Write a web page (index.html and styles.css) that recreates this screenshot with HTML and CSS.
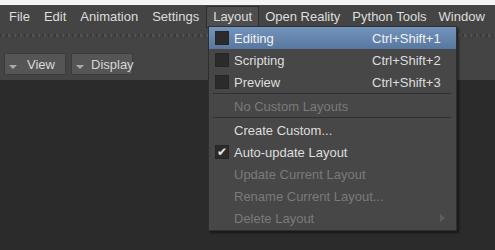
FILE: index.html
```html
<!DOCTYPE html>
<html lang="en">
<head>
  <meta charset="UTF-8">
  <title>Layout menu</title>
  <link rel="stylesheet" href="styles.css">
</head>
<body>
  <div class="app">
    <div class="topline"></div>
    <nav class="menubar">
      <span class="menu-item">File</span>
      <span class="menu-item">Edit</span>
      <span class="menu-item">Animation</span>
      <span class="menu-item">Settings</span>
      <span class="menu-item open">Layout</span>
      <span class="menu-item">Open Reality</span>
      <span class="menu-item">Python Tools</span>
      <span class="menu-item">Window</span>
    </nav>
    <div class="grip"></div>
    <div class="toolbar">
      <button class="tool-btn"><span class="tri"></span>View</button>
      <button class="tool-btn"><span class="tri"></span>Display</button>
    </div>
    <div class="workspace"></div>

    <!-- Layout dropdown -->
    <div class="dropdown">
      <div class="row active"><span class="box"></span><span class="label">Editing</span><span class="keys">Ctrl+Shift+1</span></div>
      <div class="row"><span class="box"></span><span class="label">Scripting</span><span class="keys">Ctrl+Shift+2</span></div>
      <div class="row"><span class="box"></span><span class="label">Preview</span><span class="keys">Ctrl+Shift+3</span></div>
      <div class="sep"></div>
      <div class="row disabled"><span class="nobox"></span><span class="label">No Custom Layouts</span></div>
      <div class="sep"></div>
      <div class="row"><span class="nobox"></span><span class="label">Create Custom...</span></div>
      <div class="row"><span class="box check">&#10004;</span><span class="label">Auto-update Layout</span></div>
      <div class="row disabled"><span class="nobox"></span><span class="label">Update Current Layout</span></div>
      <div class="row disabled"><span class="nobox"></span><span class="label">Rename Current Layout...</span></div>
      <div class="row disabled"><span class="nobox"></span><span class="label">Delete Layout</span><span class="arrow"></span></div>
    </div>
  </div>
</body>
</html>
```

FILE: styles.css
```css
* { box-sizing: border-box; }
html, body { margin:0; padding:0; }
body {
  font-family: "Liberation Sans", Arial, sans-serif;
  font-size: 13px;
  color: #dedede;
  background: #2b2b2b;
}
.app { position:relative; width:495px; height:250px; overflow:hidden; background:#2b2b2b; }
.topline { height:5px; background:#f4f4f4; }
/* Menubar */
.menubar { height:23px; background:#444; display:flex; align-items:center; padding-left:2px; white-space:nowrap; }
.menu-item { flex-shrink:0; padding:2px 6px 3px; border:1px solid transparent; line-height:15px; }
.menu-item.open { background:#4e4e4e; border-color:#2e2e2e; margin-top:1px; }
.menu-item.open ~ .menu-item { padding:2px 5px 3px; }
/* grip strip */
.grip {
  height:16px; background:#444;
  background-image: repeating-linear-gradient(90deg, #3a3a3a 0 2px, #525252 2px 4px, #444 4px 6px);
  background-size: 100% 3px; background-position: 0 6px; background-repeat:no-repeat;
}
/* Toolbar */
.toolbar { height:36px; background:#444; display:flex; gap:5px; padding:9px 4px 0; }
.tool-btn {
  height:22px; width:62px; background:#555; border:1px solid #3c3c3c; color:#d8d8d8;
  font-family:inherit; font-size:13px; display:flex; align-items:center; padding:0 0 0 3px;
}
.tool-btn .tri {
  width:0; height:0; border-left:4px solid transparent; border-right:4px solid transparent;
  border-top:4px solid #aaa; margin:5px 10px 0 1px;
}
.tool-btn + .tool-btn .tri { margin-right:7px; }
.workspace { height:170px; background:#2b2b2b; }
/* Dropdown */
.dropdown {
  position:absolute; left:208px; top:26px; width:249px;
  background:#474747; border:1px solid #2f2f2f; padding:0 0 1px;
  box-shadow:2px 2px 2px rgba(0,0,0,0.45);
}
.row { height:22px; display:flex; align-items:center; padding-left:6px; white-space:nowrap; }
.row.active { background:linear-gradient(#7394bd, #57779f); color:#f2f2f2; }
.row.disabled { color:#7a7a7a; }
.box { width:14px; height:14px; background:#2b2b2b; border:1px solid #262626; margin-right:5px;
  font-size:12px; line-height:12px; text-align:center; color:#e6e6e6; }
.nobox { width:14px; margin-right:5px; }
.label { flex:1; }
.keys { width:84px; }
.sep { height:1px; background:#303030; margin:0 5px 1px 4px; }
.arrow { width:0; height:0; border-top:4px solid transparent; border-bottom:4px solid transparent;
  border-left:5px solid #5e5e5e; margin-right:11px; }
```
